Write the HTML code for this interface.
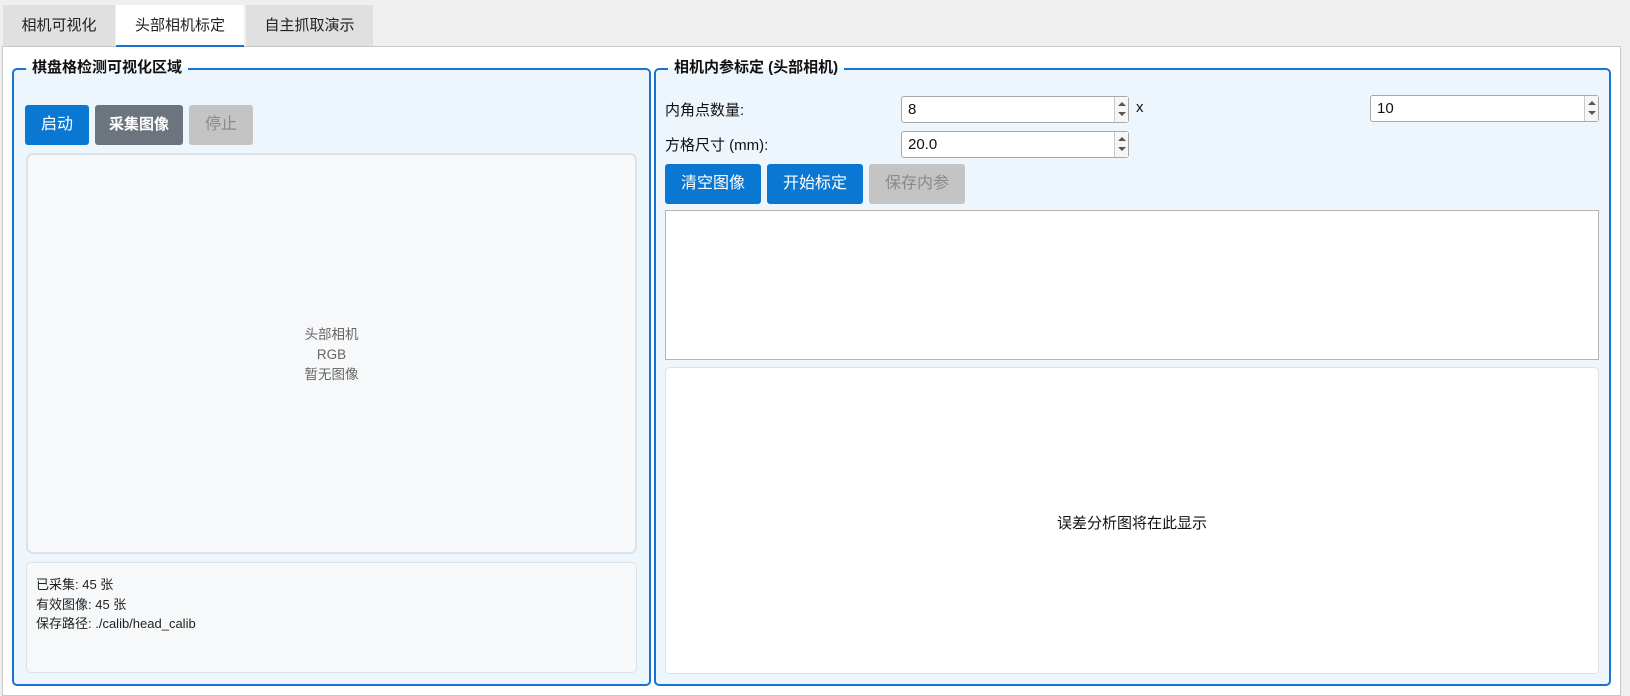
<!DOCTYPE html>
<html><head><meta charset="utf-8"><style>
*{box-sizing:border-box;margin:0;padding:0}
body{width:1630px;height:690px;background:#efefef;font-family:"Liberation Sans","Noto Sans CJK SC",sans-serif;position:relative;overflow:hidden;color:#111}
.a{position:absolute}
.tab{position:absolute;top:5px;height:41px;background:#e0e0e0;font-size:15px;line-height:41px;text-align:center;color:#222}
.panel{left:2px;top:46px;width:1619px;height:650px;background:#fff;border:1px solid #c8c8c8}
.gb{border:2px solid #1a73d1;border-radius:5px;background:#eef6fd}
.gt{position:absolute;background:#fff;padding:0 6px;font-weight:bold;font-size:15px;line-height:18px;top:-11px;left:12px;color:#111;background:linear-gradient(#fff 50%,#eef6fd 50%)}
.btn{position:absolute;height:40px;border-radius:3px;color:#fff;font-size:16px;line-height:40px;text-align:center}
.b{background:#0a78d2}
.spin{position:absolute;height:27px;background:#fff;border:1px solid #a8a8a8;border-radius:3px;font-size:15px;line-height:25px;padding-left:6px}
.spin .ar{position:absolute;right:0;top:0;width:14px;height:25px;border-left:1px solid #c8c8c8;background:#f6f6f6}
.ar:before{content:"";position:absolute;left:3px;top:5px;border:4px solid transparent;border-bottom:4px solid #555;border-top:0}
.ar:after{content:"";position:absolute;left:3px;top:15px;border:4px solid transparent;border-top:4px solid #555;border-bottom:0}
.lbl{position:absolute;font-size:15px;color:#111}
</style></head><body>
<div class="a panel"></div>
<div class="tab" style="left:3px;width:112px">相机可视化</div>
<div class="tab" style="left:116px;width:128px;background:#fff;border-bottom:2px solid #1a73d1;height:42px">头部相机标定</div>
<div class="tab" style="left:246px;width:127px">自主抓取演示</div>

<div class="a gb" style="left:12px;top:68px;width:639px;height:618px">
<div class="gt">棋盘格检测可视化区域</div></div>
<div class="btn b" style="left:25px;top:105px;width:64px">启动</div>
<div class="btn" style="left:95px;top:105px;width:88px;background:#6c757d;font-weight:bold;font-size:15px">采集图像</div>
<div class="btn" style="left:189px;top:105px;width:64px;background:#c4c4c4;color:#8a8a8a">停止</div>
<div class="a" style="left:26px;top:153px;width:611px;height:401px;background:#f6f8fa;border:2px solid #dde2e8;border-radius:7px"></div>
<div class="a" style="left:26px;top:325px;width:611px;text-align:center;font-size:13.5px;line-height:20px;color:#666">头部相机<br>RGB<br>暂无图像</div>
<div class="a" style="left:26px;top:562px;width:611px;height:111px;background:#f6f8fa;border:1px solid #dde2e8;border-radius:5px"></div>
<div class="a" style="left:36px;top:575px;font-size:13px;line-height:19.5px;color:#222">已采集: 45 张<br>有效图像: 45 张<br>保存路径: ./calib/head_calib</div>

<div class="a gb" style="left:654px;top:68px;width:957px;height:618px">
<div class="gt">相机内参标定 (头部相机)</div></div>
<div class="lbl" style="left:665px;top:99px">内角点数量:</div>
<div class="spin" style="left:901px;top:96px;width:228px">8<div class="ar"></div></div>
<div class="lbl" style="left:1136px;top:99px">x</div>
<div class="spin" style="left:1370px;top:95px;width:229px">10<div class="ar"></div></div>
<div class="lbl" style="left:665px;top:134px">方格尺寸 (mm):</div>
<div class="spin" style="left:901px;top:131px;width:228px">20.0<div class="ar"></div></div>
<div class="btn b" style="left:665px;top:164px;width:96px">清空图像</div>
<div class="btn b" style="left:767px;top:164px;width:96px">开始标定</div>
<div class="btn" style="left:869px;top:164px;width:96px;background:#c4c4c4;color:#8a8a8a">保存内参</div>
<div class="a" style="left:665px;top:210px;width:934px;height:150px;background:#fff;border:1px solid #b4b4b4"></div>
<div class="a" style="left:665px;top:367px;width:934px;height:307px;background:#fff;border:1px solid #dde2e8;border-radius:5px"></div>
<div class="a" style="left:665px;top:512px;width:934px;text-align:center;font-size:15px;color:#111">误差分析图将在此显示</div>
</body></html>
